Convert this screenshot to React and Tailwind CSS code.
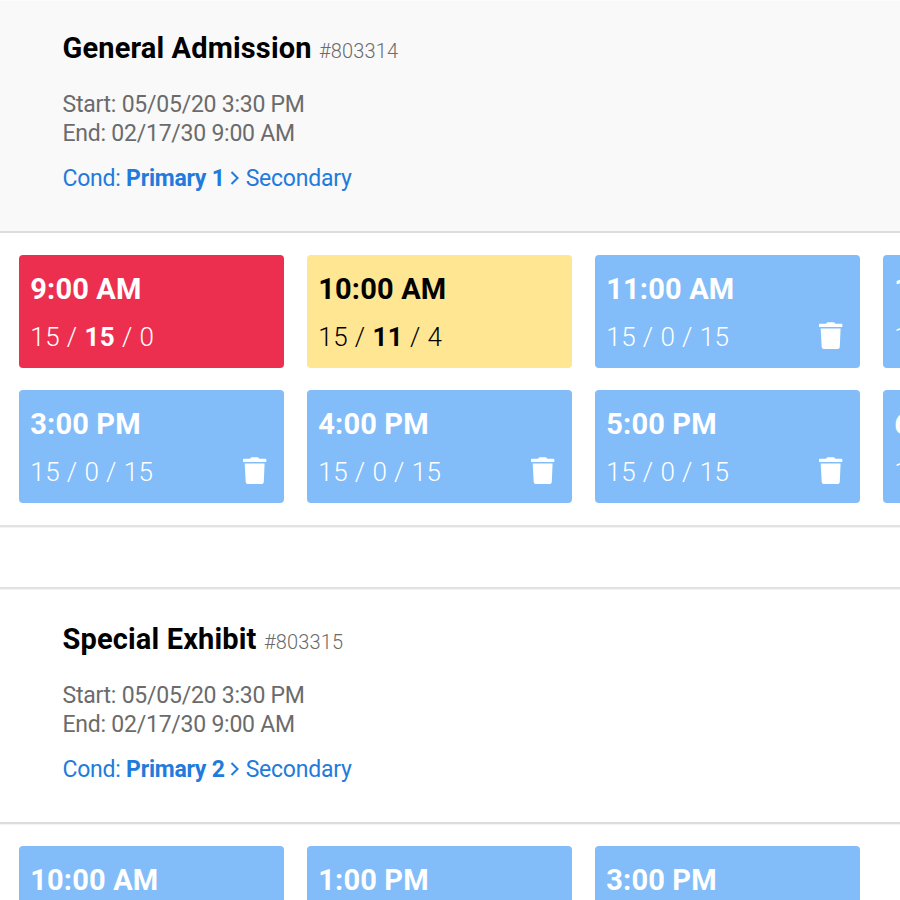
const TONES = {
  red: 'bg-[#ed2f4f] text-white',
  yellow: 'bg-[#ffe692] text-black',
  blue: 'bg-[#82bdf9] text-white',
};

function Trash() {
  return (
    <svg className="mr-[6px] mb-[2px] h-[28px] w-[24px] shrink-0" viewBox="0 0 24 28" fill="currentColor">
      <path d="M0 2.5Q0 1.8 0.7 1.8H7Q7.6 0.2 8.8 0.2H14.6Q15.7 0.2 16.4 1.8H22.6Q23.3 1.8 23.3 2.5V5H0ZM1.7 6.4H21.6L20.8 25.1Q20.6 27 18.8 27H4.7Q2.9 27 2.7 25.1Z" />
    </svg>
  );
}

function Slot({ time, counts, tone = 'blue' }) {
  const [total, sold, left] = counts;
  return (
    <div className={`flex h-[113px] flex-col rounded-[4px] pt-4 pl-[11.3px] pr-[11px] ${TONES[tone]}`}>
      <div className="h-9 text-[29px] leading-9 font-bold tracking-[0.15px] whitespace-nowrap">{time}</div>
      <div className="mt-3 flex h-9 items-center justify-between">
        <div className="text-[26px] leading-9 font-light tracking-[0.45px] whitespace-nowrap">
          {total} / <span className={sold > 0 ? 'font-bold' : ''}>{sold}</span> / {left}
        </div>
        {tone === 'blue' && <Trash />}
      </div>
    </div>
  );
}

function Header({ title, id, primary, shade }) {
  return (
    <header className={`h-[233px] border-b-2 border-[#dcdcdc] pt-[30px] pl-[62.5px] ${shade}`}>
      <h2 className="h-9 text-[29px] leading-9 font-bold tracking-[0.15px] whitespace-nowrap text-black">
        {title}{' '}
        <span className="text-[20px] font-light text-[#6b6b6b]">#{id}</span>
      </h2>
      <div className="mt-[24px] text-[23px] leading-[29px] tracking-[-0.24px] text-[#6b6b6b]">
        <div>Start: 05/05/20 3:30 PM</div>
        <div>End: 02/17/30 9:00 AM</div>
      </div>
      <div className="mt-4 flex items-center text-[23px] leading-[29px] tracking-[-0.24px] text-[#227bdc]">
        <span className="whitespace-pre">Cond: <b className="font-bold">{primary}</b></span>
        <svg className="mr-[7px] mb-[2px] ml-[5px] h-[14px] w-[9px]" viewBox="0 0 9 14" fill="none" stroke="currentColor" strokeWidth="2">
          <path d="M1.5 1L7.6 7L1.5 13" />
        </svg>
        <span>Secondary</span>
      </div>
    </header>
  );
}

function Grid({ children }) {
  return <div className="grid w-[1129px] grid-cols-[repeat(4,265px)] gap-x-[23px] gap-y-[22px] pt-[22px] pl-[19px]">{children}</div>;
}

export default function App() {
  return (
    <main className="h-[900px] w-[900px] overflow-hidden bg-white font-['Roboto',sans-serif]">
      <section className="h-[527px] border-b-2 border-[#e2e2e2] shadow-[0_1px_0_#f3f3f3]">
        <Header title="General Admission" id="803314" primary="Primary 1" shade="bg-[#f9f9f9] shadow-[inset_0_1px_0_#fdfdfd]" />
        <Grid>
          <Slot time="9:00 AM" counts={[15, 15, 0]} tone="red" />
          <Slot time="10:00 AM" counts={[15, 11, 4]} tone="yellow" />
          <Slot time="11:00 AM" counts={[15, 0, 15]} />
          <Slot time="1:00 PM" counts={[15, 0, 15]} />
          <Slot time="3:00 PM" counts={[15, 0, 15]} />
          <Slot time="4:00 PM" counts={[15, 0, 15]} />
          <Slot time="5:00 PM" counts={[15, 0, 15]} />
          <Slot time="6:00 PM" counts={[15, 0, 15]} />
        </Grid>
      </section>
      <section className="mt-[60px] border-t-2 border-[#e2e2e2] pt-[2px] shadow-[inset_0_1px_0_#f3f3f3]">
        <Header title="Special Exhibit" id="803315" primary="Primary 2" shade="bg-transparent shadow-[0_1px_0_#f3f3f3]" />
        <Grid>
          <Slot time="10:00 AM" counts={[15, 0, 15]} />
          <Slot time="1:00 PM" counts={[15, 0, 15]} />
          <Slot time="3:00 PM" counts={[15, 0, 15]} />
        </Grid>
      </section>
    </main>
  );
}
